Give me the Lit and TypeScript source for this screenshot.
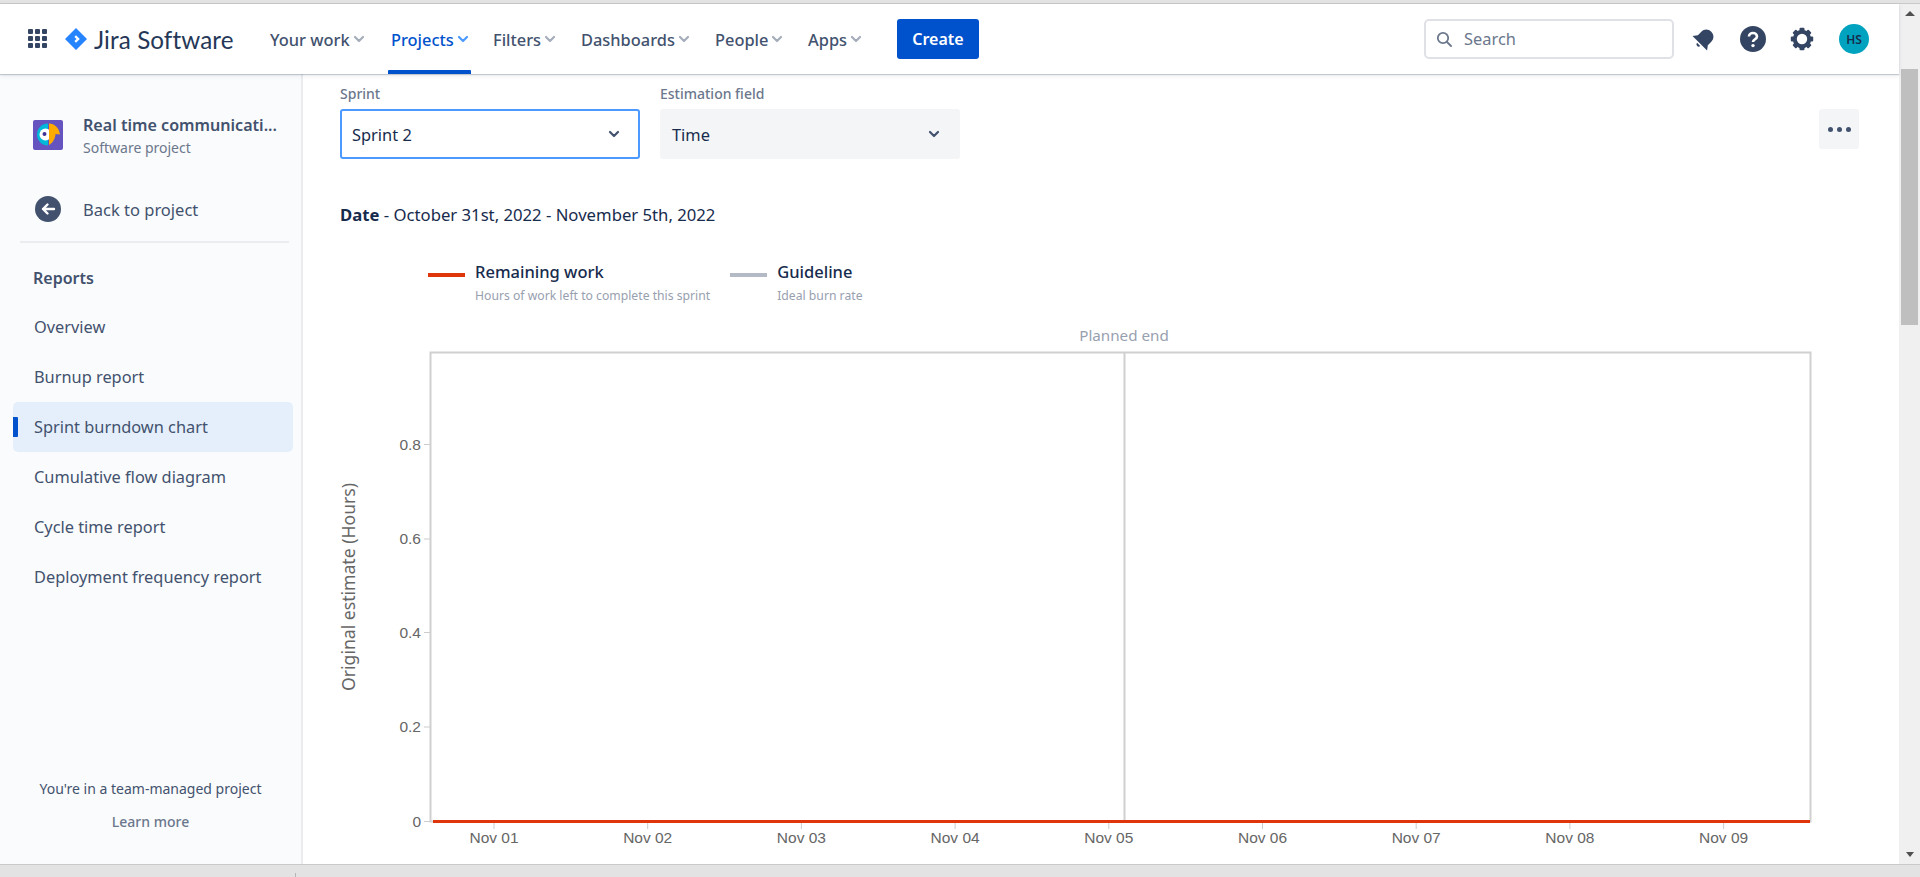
import { LitElement, html, css, svg } from 'lit';
import { customElement } from 'lit/decorators.js';

const NAV = [
  { label: 'Your work', width: 121, gap: 0 },
  { label: 'Projects', width: 83, gap: 19, active: true },
  { label: 'Filters', width: 88, gap: 0 },
  { label: 'Dashboards', width: 134, gap: 0 },
  { label: 'People', width: 93, gap: 0 },
  { label: 'Apps', width: 92, gap: 0 },
];

const REPORTS = [
  'Overview',
  'Burnup report',
  'Sprint burndown chart',
  'Cumulative flow diagram',
  'Cycle time report',
  'Deployment frequency report',
];

const chevron = html`<svg class="chev" viewBox="0 0 12 12"><path d="M2 4l4 4 4-4" fill="none" stroke="currentColor" stroke-width="2.2" stroke-linecap="round" stroke-linejoin="round"/></svg>`;

@customElement('burndown-chart')
class BurndownChart extends LitElement {
  static styles = css`
    :host { display: block; }
    svg { display: block; }
    .tick { font: 15.5px 'Liberation Sans', Arial, sans-serif; fill: #666; }
    .title { font: 17.6px 'Noto Sans', sans-serif; fill: #666; }
    .planned { font: 15.2px 'Noto Sans', sans-serif; fill: #97a0af; }
  `;

  render() {
    const yTicks = [
      { label: '0.8', y: 124.5 },
      { label: '0.6', y: 219 },
      { label: '0.4', y: 312.5 },
      { label: '0.2', y: 407 },
      { label: '0', y: 501.5 },
    ];
    const days = ['01', '02', '03', '04', '05', '06', '07', '08', '09'];
    return html`<svg width="1500" height="544" viewBox="0 0 1500 544">
      <text class="planned" x="784" y="21" text-anchor="middle">Planned end</text>
      <rect x="90.5" y="32.5" width="1380" height="469" fill="#fff" stroke="#d0d0d0" stroke-width="2"/>
      <line x1="784.5" y1="32" x2="784.5" y2="502" stroke="#d0d0d0" stroke-width="2"/>
      ${yTicks.map(
        (t) => svg`
          <line x1="84" x2="90" y1=${t.y} y2=${t.y} stroke="#ccc"/>
          <text class="tick" x="81" y=${t.y + 5} text-anchor="end">${t.label}</text>`
      )}
      ${days.map((d, i) => {
        const x = 154 + i * 153.7;
        return svg`
          <line x1=${x} x2=${x} y1="502" y2="509" stroke="#ccc"/>
          <text class="tick" x=${x} y="523" text-anchor="middle">Nov ${d}</text>`;
      })}
      <line x1="93" x2="1470" y1="501.5" y2="501.5" stroke="#de350b" stroke-width="3"/>
      <text class="title" transform="translate(15 267) rotate(-90)" text-anchor="middle">Original estimate (Hours)</text>
    </svg>`;
  }
}

@customElement('app-root')
export class AppRoot extends LitElement {
  static styles = css`
    :host {
      display: flex;
      flex-direction: column;
      width: 1920px;
      height: 877px;
      overflow: hidden;
      background: #fff;
      font-family: 'Noto Sans', 'Open Sans', sans-serif;
      color: #172b4d;
    }
    .top-edge { height: 3px; background: #e3e3e3; border-bottom: 1px solid #c9c9c9; flex: none; }
    .window { flex: 1; display: flex; min-height: 0; }
    .page { flex: 1; display: flex; flex-direction: column; min-width: 0; }
    .bottom-edge {
      height: 12px;
      flex: none;
      background: #e3e3e3;
      border-top: 1px solid #c9c9c9;
      display: flex;
      align-items: flex-end;
      padding-left: 295px;
    }
    .bottom-edge i { width: 1px; height: 4px; background: #b5b5b5; }

    /* scrollbar */
    .scrollbar {
      width: 21px;
      flex: none;
      background: #f0f0f0;
      display: flex;
      flex-direction: column;
      align-items: center;
      padding-top: 7px;
      box-sizing: border-box;
      position: relative;
    }
    .arrow-up { border: 5px solid transparent; border-top: 0; border-bottom: 5px solid #505050; }
    .arrow-down { border: 4px solid transparent; border-bottom: 0; border-top: 5px solid #505050; position: absolute; bottom: 7px; }
    .thumb { width: 17px; height: 256px; background: #bfbfbf; margin-top: 53px; }

    /* header */
    header {
      height: 70px;
      flex: none;
      display: flex;
      align-items: center;
      padding-left: 28px;
      box-sizing: border-box;
      background: #fff;
      box-shadow: 0 1px 1px rgba(9, 30, 66, 0.2), 0 2px 5px rgba(9, 30, 66, 0.08);
      position: relative;
      z-index: 1;
    }
    .apps { width: 20px; height: 20px; margin-right: 17px; flex: none; }
    .logo { width: 22px; height: 22px; margin-right: 7px; flex: none; }
    .brand {
      font-family: Lato, sans-serif;
      font-size: 24.2px;
      letter-spacing: 0.1px;
      color: #253858;
      width: 173px;
      flex: none;
    }
    nav { display: flex; height: 100%; }
    .nav-item {
      display: flex;
      align-items: center;
      gap: 3px;
      height: 100%;
      box-sizing: border-box;
      padding-left: 3px;
      font-size: 16.4px;
      font-weight: 500;
      color: #42526e;
      position: relative;
      flex: none;
    }
    .nav-item .chev { color: #a5adba; }
    .nav-item.active { color: #0052cc; }
    .nav-item.active .chev { color: #4c9aff; }
    .nav-item.active::after {
      content: '';
      position: absolute;
      left: 0;
      right: 0;
      bottom: 0;
      height: 4px;
      background: #0052cc;
      border-radius: 1px 1px 0 0;
    }
    .chev { width: 12px; height: 12px; flex: none; }
    .create {
      width: 82px;
      height: 40px;
      border-radius: 3px;
      background: #0052cc;
      color: #fff;
      font-size: 16px;
      font-weight: 600;
      display: flex;
      align-items: center;
      justify-content: center;
      flex: none;
    }
    .spacer { flex: 1; }
    .search {
      width: 250px;
      height: 40px;
      box-sizing: border-box;
      border: 2px solid #dfe1e6;
      border-radius: 5px;
      display: flex;
      align-items: center;
      padding: 0 0 2px 10px;
      gap: 12px;
      color: #6b778c;
      font-size: 16.4px;
      flex: none;
    }
    .search svg { width: 16px; height: 16px; margin-top: 2px; }
    .tools { display: flex; align-items: center; margin-left: 19px; margin-right: 30px; }
    .tools svg { flex: none; }
    .bell { width: 26px; height: 26px; margin: 0 23px 0 -2px; }
    .help { width: 26px; height: 26px; margin-right: 23px; }
    .gear { width: 26px; height: 26px; margin-right: 24px; }
    .avatar {
      width: 30px;
      height: 30px;
      border-radius: 50%;
      background: #00a3bf;
      color: #172b4d;
      font-size: 12px;
      font-weight: 600;
      display: flex;
      align-items: center;
      justify-content: center;
    }

    /* body */
    .body { flex: 1; display: flex; min-height: 0; overflow: hidden; }
    aside {
      width: 303px;
      flex: none;
      box-sizing: border-box;
      background: #fafbfc;
      border-right: 2px solid #ebecf0;
      display: flex;
      flex-direction: column;
      color: #42526e;
    }
    .project { display: flex; align-items: center; gap: 20px; padding: 40px 0 0 33px; }
    .project svg { width: 30px; height: 30px; flex: none; margin-top: -3px; }
    .project-name {
      font-size: 16.1px;
      font-weight: 600;
      line-height: 22px;
      white-space: nowrap;
    }
    .project-sub { font-size: 14px; line-height: 20px; margin-top: 2px; color: #6b778c; }
    .back {
      display: flex;
      align-items: center;
      gap: 22px;
      padding-left: 35px;
      margin-top: 38px;
      height: 26px;
      font-size: 16.5px;
    }
    .back svg { width: 26px; height: 26px; flex: none; }
    .divider { height: 2px; background: #ebecf0; margin: 19px 12px 0 20px; }
    .group { font-size: 16px; font-weight: 600; margin: 23px 0 0 33px; line-height: 24px; }
    .reports { margin: 0; padding: 12px 0 0 13px; list-style: none; }
    .reports li {
      width: 280px;
      height: 50px;
      box-sizing: border-box;
      padding-left: 21px;
      display: flex;
      align-items: center;
      font-size: 16.35px;
      border-radius: 5px;
      position: relative;
    }
    .reports li.active { background: #e5effb; }
    .reports li.active::before {
      content: '';
      position: absolute;
      left: 0;
      top: 15px;
      width: 5px;
      height: 20px;
      background: #0052cc;
      border-radius: 0 1px 1px 0;
    }
    .team {
      margin-top: auto;
      padding-bottom: 32px;
      text-align: center;
      font-size: 14px;
      line-height: 20px;
    }
    .team div + div { margin-top: 13px; color: #6b778c; font-weight: 500; }

    main { flex: 1; min-width: 0; padding: 11px 40px 0 37px; }
    .filters { display: flex; align-items: flex-end; gap: 20px; }
    .field { display: flex; flex-direction: column; gap: 6px; }
    .field label { font-size: 14px; line-height: 18px; font-weight: 500; color: #6b778c; }
    .select {
      width: 300px;
      height: 50px;
      box-sizing: border-box;
      border-radius: 3px;
      background: #f4f5f7;
      display: flex;
      align-items: center;
      justify-content: space-between;
      padding: 0 20px 0 12px;
      font-size: 16.4px;
      color: #172b4d;
    }
    .select.focus { background: #fff; border: 2px solid #4c9aff; padding: 0 18px 0 10px; }
    .select .chev { color: #42526e; }
    .more {
      margin-left: auto;
      align-self: flex-start;
      margin-top: 24px;
      width: 40px;
      height: 40px;
      border-radius: 3px;
      background: #f4f5f7;
      display: flex;
      align-items: center;
      justify-content: center;
      gap: 4px;
    }
    .more i { width: 5px; height: 5px; border-radius: 50%; background: #42526e; }
    .date { margin-top: 44px; font-size: 16.7px; line-height: 24px; }
    .date b { font-weight: 700; }
    .legend { display: flex; margin: 33px 0 0 88px; height: 60px; }
    .legend-item { display: flex; align-items: flex-start; gap: 10px; }
    .legend-item + .legend-item { margin-left: 20px; }
    .swatch { width: 37px; height: 4px; margin-top: 13px; flex: none; }
    .legend-title { font-size: 16.5px; font-weight: 500; line-height: 24px; }
    .legend-sub { font-size: 12.2px; line-height: 16px; margin-top: 4px; color: #97a0af; }
  `;

  render() {
    return html`
      <div class="top-edge"></div>
      <div class="window">
        <div class="page">
          <header>
            <svg class="apps" viewBox="0 0 20 20" fill="#344563">
              ${[1, 8, 15].map((y) => [1, 8, 15].map((x) => svg`<rect x=${x - 1} y=${y - 1} width="5" height="5" rx="1"/>`))}
            </svg>
            <svg class="logo" viewBox="0 0 22 22">
              <path fill="#2684ff" fill-rule="evenodd" d="M11 0l11 11-11 11L0 11zM11 7.200L9.400 9l2.100 2-2.100 2 1.600 1.800L14.800 11z"/>
            </svg>
            <div class="brand">Jira Software</div>
            <nav>
              ${NAV.map(
                (n) => html`<div class="nav-item ${n.active ? 'active' : ''}" style="width:${n.width}px;margin-right:${n.gap}px">${n.label}${chevron}</div>`
              )}
            </nav>
            <div class="create">Create</div>
            <div class="spacer"></div>
            <div class="search">
              <svg viewBox="0 0 16 16"><circle cx="7" cy="7" r="5.200" fill="none" stroke="#6b778c" stroke-width="1.800"/><path d="M11 11l4 4" stroke="#6b778c" stroke-width="1.800" stroke-linecap="round"/></svg>
              Search
            </div>
            <div class="tools">
              <svg class="bell" viewBox="0 0 24 24" fill="#344563">
                <g transform="rotate(45 12 12)">
                  <path d="M12 2.500c-3.900 0-6.500 2.900-6.500 6.500v4.500L2.500 17.500h19l-3-4V9c0-3.600-2.600-6.500-6.500-6.500z"/>
                  <path d="M10 19h4a2 2 0 0 1-4 0z"/>
                </g>
              </svg>
              <svg class="help" viewBox="0 0 26 26">
                <circle cx="13" cy="13" r="13" fill="#344563"/>
                <path d="M9 10.500c0-2.200 1.800-3.500 4-3.500s4 1.400 4 3.400c0 2.800-4 2.800-4 5.600" fill="none" stroke="#fff" stroke-width="2.600"/>
                <circle cx="13" cy="19.600" r="1.700" fill="#fff"/>
              </svg>
              <svg class="gear" viewBox="0 0 26 26">
                ${[0, 45, 90, 135, 180, 225, 270, 315].map(
                  (a) => svg`<rect x="10.500" y="1.800" width="5" height="5" rx="1" fill="#344563" transform="rotate(${a} 13 13)"/>`
                )}
                <circle cx="13" cy="13" r="7.200" fill="none" stroke="#344563" stroke-width="4"/>
              </svg>
              <div class="avatar">HS</div>
            </div>
          </header>
          <div class="body">
            <aside>
              <div class="project">
                <svg viewBox="0 0 30 30">
                  <rect width="30" height="30" rx="2" fill="#6554c0"/>
                  <path d="M15 3.500a11 11 0 0 0 0 22z" fill="#00b8d9"/>
                  <circle cx="12.500" cy="14.500" r="6" fill="#fff"/>
                  <circle cx="11.500" cy="14" r="2" fill="#403294"/>
                  <path d="M16 3.500c5.500 0 10 4 11 11l-4.500-.5c-.3 4.700-2.800 9-6.500 11z" fill="#ffab00"/>
                </svg>
                <div>
                  <div class="project-name">Real time communicati...</div>
                  <div class="project-sub">Software project</div>
                </div>
              </div>
              <div class="back">
                <svg viewBox="0 0 26 26">
                  <circle cx="13" cy="13" r="13" fill="#42526e"/>
                  <path d="M19 13H8M12.500 8.500L8 13l4.500 4.500" fill="none" stroke="#fff" stroke-width="2.400" stroke-linecap="round" stroke-linejoin="round"/>
                </svg>
                Back to project
              </div>
              <div class="divider"></div>
              <div class="group">Reports</div>
              <ul class="reports">
                ${REPORTS.map(
                  (r) => html`<li class=${r === 'Sprint burndown chart' ? 'active' : ''}>${r}</li>`
                )}
              </ul>
              <div class="team">
                <div>You're in a team-managed project</div>
                <div>Learn more</div>
              </div>
            </aside>
            <main>
              <div class="filters">
                <div class="field">
                  <label>Sprint</label>
                  <div class="select focus">Sprint 2 ${chevron}</div>
                </div>
                <div class="field">
                  <label>Estimation field</label>
                  <div class="select">Time ${chevron}</div>
                </div>
                <div class="more"><i></i><i></i><i></i></div>
              </div>
              <div class="date"><b>Date</b> - October 31st, 2022 - November 5th, 2022</div>
              <div class="legend">
                <div class="legend-item">
                  <span class="swatch" style="background:#de350b"></span>
                  <div>
                    <div class="legend-title">Remaining work</div>
                    <div class="legend-sub">Hours of work left to complete this sprint</div>
                  </div>
                </div>
                <div class="legend-item">
                  <span class="swatch" style="background:#b3bac5"></span>
                  <div>
                    <div class="legend-title">Guideline</div>
                    <div class="legend-sub">Ideal burn rate</div>
                  </div>
                </div>
              </div>
              <burndown-chart></burndown-chart>
            </main>
          </div>
        </div>
        <div class="scrollbar">
          <span class="arrow-up"></span>
          <div class="thumb"></div>
          <span class="arrow-down"></span>
        </div>
      </div>
      <div class="bottom-edge"><i></i></div>
    `;
  }
}
